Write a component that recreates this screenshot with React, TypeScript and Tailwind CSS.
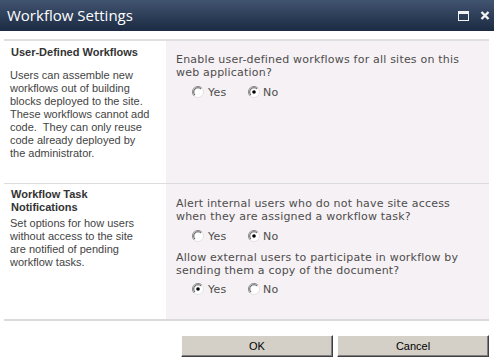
import React from "react"

function Radio({ checked }: { checked?: boolean }) {
  return (
    <svg width="12" height="12" viewBox="0 0 12 12" className="shrink-0">
      <circle cx="6" cy="6" r="5.5" fill="#fff" stroke="#e2e2e2" />
      <path d="M2.1 9.9 A5.5 5.5 0 0 1 9.9 2.1" fill="none" stroke="#8a8a8a" />
      <path d="M3 9 A4.2 4.2 0 0 1 9 3" fill="none" stroke="#444" strokeWidth="0.9" />
      {checked && <circle cx="6" cy="6" r="1.8" fill="#000" />}
    </svg>
  )
}

function Options({ yes, className }: { yes: boolean; className: string }) {
  return (
    <div className={`flex items-center h-[16px] pl-[16px] ${className}`}>
      <label className="w-[56px] flex items-center gap-[4px]">
        <Radio checked={yes} />
        <span>Yes</span>
      </label>
      <label className="flex items-center gap-[3px]">
        <Radio checked={!yes} />
        <span>No</span>
      </label>
    </div>
  )
}

export default function App() {
  return (
    <div className="w-[494px] h-[357px] bg-white overflow-hidden">
      {/* Title bar */}
      <div className="h-[31px] flex items-center justify-between pl-[7px] pr-[4px] bg-gradient-to-b from-[#415470] to-[#1c2b43]">
        <span className="text-[15px] text-white font-['Open_Sans',sans-serif]">Workflow Settings</span>
        <div className="flex items-center gap-[11px]">
          <svg width="11" height="10" viewBox="0 0 11 10">
            <rect x="0.5" y="0.5" width="10" height="9" fill="none" stroke="#f2f2f2" />
            <rect x="0" y="0" width="11" height="3" fill="#f2f2f2" />
          </svg>
          <svg width="10" height="9" viewBox="0 0 10 9">
            <path d="M1.5 1 L8.5 8 M8.5 1 L1.5 8" stroke="#f2f2f2" strokeWidth="2.4" />
          </svg>
        </div>
      </div>

      {/* Sections */}
      <div className="ml-[4px] mr-[5px] mt-[8px] border-t-2 border-[#dfdfdf]">
        <div className="h-[143px] flex border-b border-[#dcdcdc]">
          <div className="w-[162px] pl-[6px] pt-[5px] text-[11px] leading-[13px] font-['Liberation_Sans',Arial,sans-serif]">
            <div className="font-bold text-[#333] pl-[1px]">User-Defined Workflows</div>
            <div className="mt-[10px] text-[#444]">
              Users can assemble new<br />
              workflows out of building<br />
              blocks deployed to the site.<br />
              These workflows cannot add<br />
              code.&nbsp; They can only reuse<br />
              code already deployed by<br />
              the administrator.
            </div>
          </div>
          <div className="flex-1 bg-[#f6f1f4] pl-[10px] pt-[12px] text-[11px] leading-[13px] tracking-[0.2px] text-[#4d4d4d] font-['DejaVu_Sans',Verdana,sans-serif]">
            <div>
              Enable user-defined workflows for all sites on this<br />
              web application?
            </div>
            <Options yes={false} className="mt-[5px]" />
          </div>
        </div>

        <div className="h-[137px] flex border-b-2 border-[#dadada]">
          <div className="w-[162px] pl-[6px] pt-[4px] text-[11px] leading-[13px] font-['Liberation_Sans',Arial,sans-serif]">
            <div className="font-bold text-[#333] pl-[1px]">
              Workflow Task<br />
              Notifications
            </div>
            <div className="mt-[3px] text-[#444]">
              Set options for how users<br />
              without access to the site<br />
              are notified of pending<br />
              workflow tasks.
            </div>
          </div>
          <div className="flex-1 bg-[#f6f1f4] pl-[10px] pt-[13px] text-[11px] leading-[13px] tracking-[0.2px] text-[#4d4d4d] font-['DejaVu_Sans',Verdana,sans-serif]">
            <div>
              Alert internal users who do not have site access<br />
              when they are assigned a workflow task?
            </div>
            <Options yes={false} className="mt-[5px]" />
            <div className="mt-[7px]">
              Allow external users to participate in workflow by<br />
              sending them a copy of the document?
            </div>
            <Options yes={true} className="mt-[4px]" />
          </div>
        </div>
      </div>

      {/* Buttons */}
      <div className="mt-[14px] mr-[5px] flex justify-end gap-[4px]">
        <button className="w-[152px] h-[22px] bg-[#d4d0c8] border border-t-white border-l-white border-r-[#404040] border-b-[#404040] shadow-[inset_-1px_-1px_0_#808080] text-[11px] text-black font-['Liberation_Sans',Arial,sans-serif]">
          OK
        </button>
        <button className="w-[152px] h-[22px] bg-[#d4d0c8] border border-t-white border-l-white border-r-[#404040] border-b-[#404040] shadow-[inset_-1px_-1px_0_#808080] text-[11px] text-black font-['Liberation_Sans',Arial,sans-serif]">
          Cancel
        </button>
      </div>
    </div>
  )
}
